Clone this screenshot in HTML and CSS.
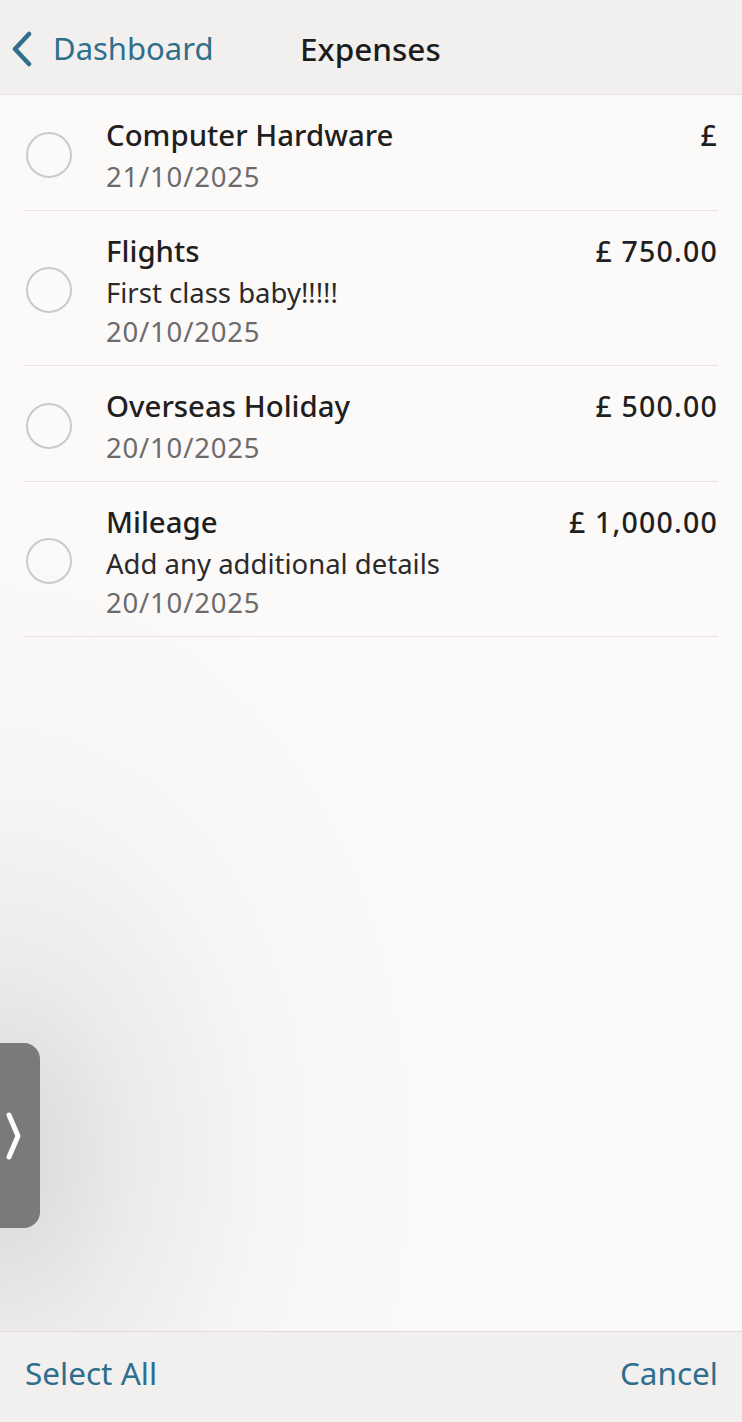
FILE: index.html
```html
<!DOCTYPE html>
<html lang="en">
<head>
<meta charset="utf-8">
<title>Expenses</title>
<link rel="stylesheet" href="styles.css">
</head>
<body>
<div class="app">
  <header class="topbar">
    <a class="back">
      <svg class="back-icon" width="24" height="36" viewBox="0 0 24 36"><path d="M19 3 L5 18 L19 33" fill="none" stroke="#2f6e8c" stroke-width="4.5" stroke-linecap="round" stroke-linejoin="round"/></svg>
      <span>Dashboard</span>
    </a>
    <h1 class="title">Expenses</h1>
  </header>

  <main class="content">
    <ul class="list">
      <li class="row">
        <span class="radio"></span>
        <div class="info">
          <div class="name">Computer Hardware</div>
          <div class="date">21/10/2025</div>
        </div>
        <div class="amount">£</div>
      </li>
      <li class="row">
        <span class="radio"></span>
        <div class="info">
          <div class="name">Flights</div>
          <div class="desc">First class baby!!!!!</div>
          <div class="date">20/10/2025</div>
        </div>
        <div class="amount">£ 750.00</div>
      </li>
      <li class="row">
        <span class="radio"></span>
        <div class="info">
          <div class="name">Overseas Holiday</div>
          <div class="date">20/10/2025</div>
        </div>
        <div class="amount">£ 500.00</div>
      </li>
      <li class="row">
        <span class="radio"></span>
        <div class="info">
          <div class="name">Mileage</div>
          <div class="desc">Add any additional details</div>
          <div class="date">20/10/2025</div>
        </div>
        <div class="amount">£ 1,000.00</div>
      </li>
    </ul>
    <button class="side-tab" aria-label="Open">
      <svg width="20" height="52" viewBox="0 0 20 52"><path d="M5 5 L14 26 L5 47" fill="none" stroke="#ffffff" stroke-width="5" stroke-linecap="round" stroke-linejoin="round"/></svg>
    </button>
  </main>

  <footer class="bottombar">
    <a class="action">Select All</a>
    <a class="action">Cancel</a>
  </footer>
</div>
</body>
</html>
```
FILE: styles.css
```css
* { box-sizing: border-box; }
html, body {
  margin: 0;
  padding: 0;
  height: 100%;
}
body {
  font-family: "Noto Sans", "Open Sans", sans-serif;
  background: #fcf9f9;
}
.app {
  height: 1422px;
  display: flex;
  flex-direction: column;
}
.topbar {
  height: 95px;
  flex: none;
  background: #f2f0ef;
  border-bottom: 1px solid #e6e3e2;
  display: flex;
  align-items: center;
  padding: 2px 0 0 10px;
}
.back {
  display: flex;
  align-items: center;
  gap: 19px;
  color: #2f6e8c;
  font-size: 31px;
  width: 290px;
}
.back-icon { flex: none; margin-top: 2px; }
.title {
  margin: 0;
  font-size: 31.5px;
  font-weight: 500;
  color: #1c1c1c;
}
.content {
  flex: 1;
  position: relative;
  background:
    radial-gradient(ellipse 460px 640px at 0 1060px, rgba(205,203,204,0.75) 0%, rgba(222,220,221,0.5) 30%, rgba(238,236,236,0.28) 60%, rgba(252,249,249,0) 100%),
    #fcf9f9;
}
.list {
  list-style: none;
  margin: 0;
  padding: 0 24px;
}
.row {
  display: flex;
  align-items: center;
  padding: 18px 0 14px;
  border-bottom: 1px solid #e6e3e2;
  position: relative;
}
.radio {
  flex: none;
  width: 46px;
  height: 46px;
  border: 2px solid #cbc9c9;
  border-radius: 50%;
  margin: 0 34px 0 2px;
  align-self: center;
}
.info {
  flex: 1;
  min-width: 0;
}
.name {
  font-size: 29.4px;
  line-height: 44px;
  font-weight: 500;
  color: #1f1f1f;
}
.desc {
  font-size: 27.5px;
  line-height: 39px;
  color: #2a2a2a;
}
.date {
  font-size: 27.5px;
  line-height: 39px;
  letter-spacing: 0.8px;
  color: #6c6b6b;
}
.amount {
  align-self: flex-start;
  font-size: 28.5px;
  line-height: 44px;
  font-weight: 500;
  letter-spacing: 1.2px;
  color: #1f1f1f;
  white-space: nowrap;
}
.side-tab {
  position: absolute;
  left: 0;
  top: 948px;
  width: 40px;
  height: 185px;
  border: none;
  padding: 0 0 0 4px;
  background: #7b797b;
  border-radius: 0 16px 16px 0;
  display: flex;
  align-items: center;
  justify-content: flex-start;
}
.bottombar {
  height: 91px;
  flex: none;
  background: #f2f0ef;
  border-top: 1px solid #dedbda;
  display: flex;
  justify-content: space-between;
  align-items: center;
  padding: 0 24px 9px 25px;
}
.action {
  color: #2f6e8c;
  font-size: 31.5px;
}
```
